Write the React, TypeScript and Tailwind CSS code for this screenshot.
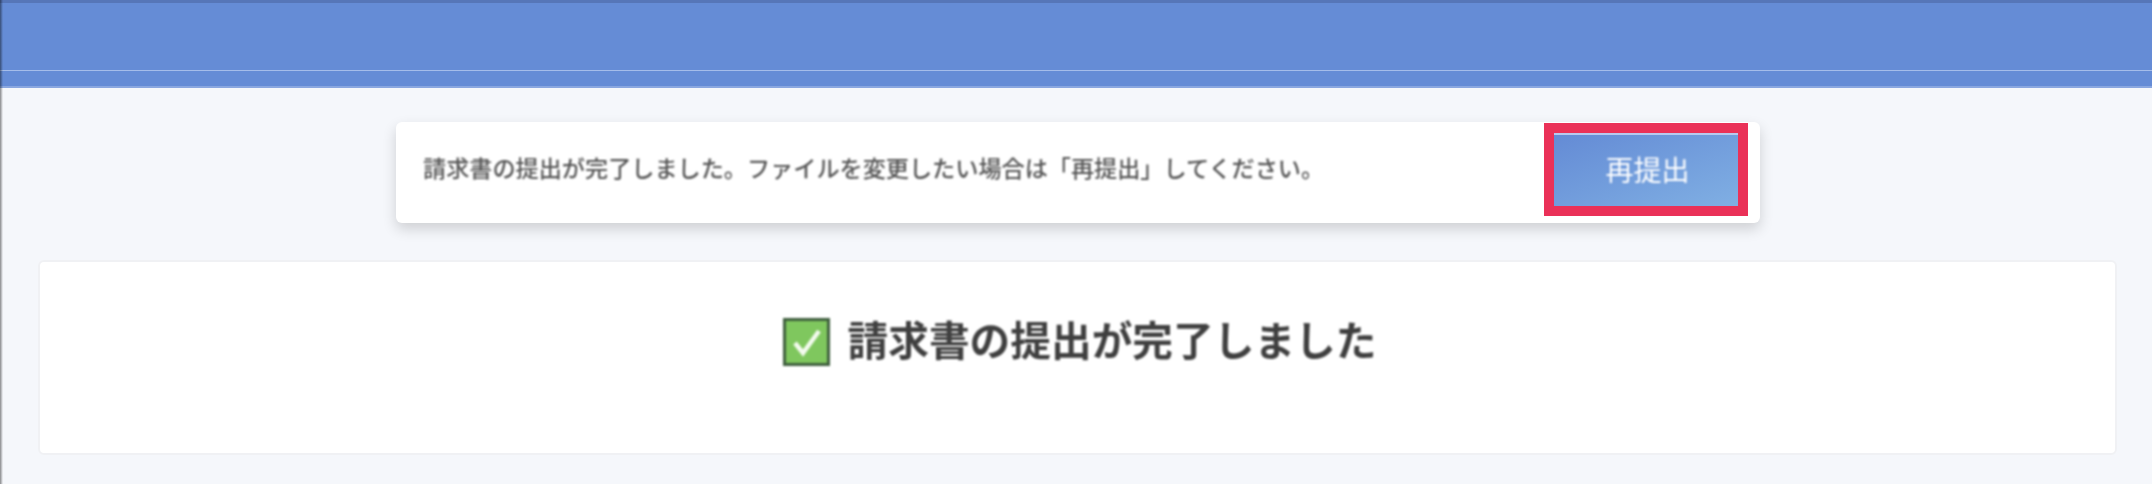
export default function App() {
  return (
    <div className="relative h-[484px] overflow-hidden bg-[#f5f7fb] font-['Noto_Sans_CJK_JP','Noto_Sans',sans-serif]">
      {/* left edge of the captured window */}
      <div className="absolute left-0 top-0 h-full w-[3px] bg-gradient-to-r from-black/45 to-transparent" />

      {/* Header */}
      <header className="h-[88px] bg-[#658cd6] border-t-[3px] border-t-[#5676b8] border-b-2 border-b-[#8aa7e0] pt-[67px]">
        <div className="h-px bg-[#a5bdea]" />
      </header>

      <main className="pl-[38px] pr-[35px] pt-[34px]">
        {/* Notice */}
        <div className="ml-[358px] w-[1364px] h-[101px] bg-white rounded-[6px] shadow-[0_6px_14px_rgba(0,0,0,0.16)] flex items-center justify-between pl-[27px] pr-[12px]">
          <p className="text-[23.15px] font-medium text-[#555555] whitespace-nowrap blur-[0.9px] mt-[-10px]">
            請求書の提出が完了しました。ファイルを変更したい場合は「再提出」してください。
          </p>
          <div className="border-[10px] border-[#ea3158] mb-[7px]">
            <button className="w-[184px] h-[73px] flex items-center justify-center bg-gradient-to-br from-[#648bd5] to-[#80afe3] border-t-2 border-[#b7c9ee] text-white text-[28px]">
              <span className="blur-[1px] ml-[3px] mt-[-2px]">再提出</span>
            </button>
          </div>
        </div>

        {/* Completed card */}
        <div className="mt-[37px] h-[195px] bg-white rounded-[6px] border-2 border-[#f0f1f4] flex justify-center pt-[56px]">
          <div className="flex items-start gap-[18px] ml-[4px]">
            <svg width="47" height="48" viewBox="0 0 47 48" className="blur-[0.8px]">
              <rect x="1.5" y="1.5" width="44" height="45" fill="#7fc75e" stroke="#3f5f3e" strokeWidth="3" />
              <path d="M12 25 L20 35 L36 13" fill="none" stroke="#f4fbef" strokeWidth="4.5" />
            </svg>
            <h1 className="text-[40.7px] leading-[48px] font-bold text-[#3f3f3f] whitespace-nowrap blur-[0.9px] mt-[-3px]">
              請求書の提出が完了しました
            </h1>
          </div>
        </div>
      </main>
    </div>
  );
}
